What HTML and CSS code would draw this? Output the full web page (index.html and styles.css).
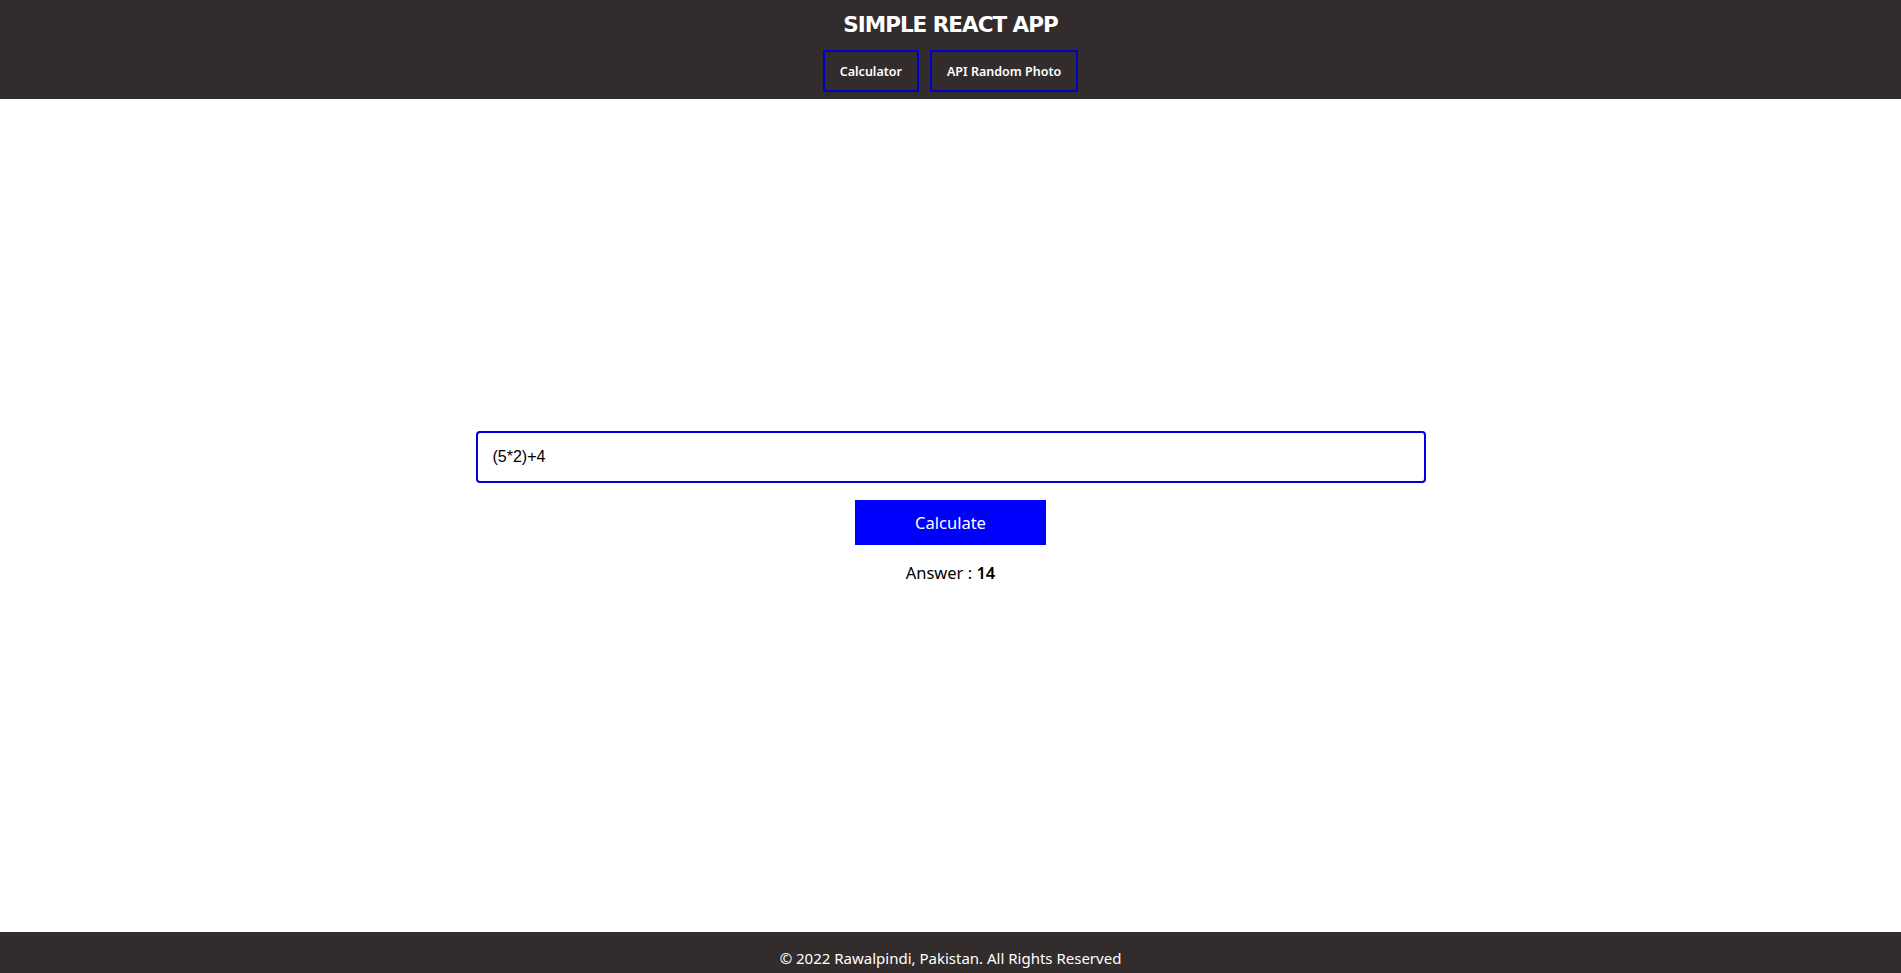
FILE: index.html
```html
<!DOCTYPE html>
<html lang="en">
<head>
<meta charset="utf-8">
<title>Simple React App</title>
<link rel="stylesheet" href="styles.css">
</head>
<body>
<div class="app">
  <header class="header">
    <h1 class="title">SIMPLE REACT APP</h1>
    <nav class="nav">
      <a class="nav-btn" href="#">Calculator</a>
      <a class="nav-btn" href="#">API Random Photo</a>
    </nav>
  </header>
  <main class="main">
    <div class="calc">
      <input class="calc-input" type="text" value="(5*2)+4">
      <button class="calc-btn" type="button">Calculate</button>
      <p class="answer">Answer : <strong>14</strong></p>
    </div>
  </main>
  <footer class="footer">© 2022 Rawalpindi, Pakistan. All Rights Reserved</footer>
</div>
</body>
</html>
```
FILE: styles.css
```css
* { box-sizing: border-box; }
html, body { margin: 0; padding: 0; height: 100%; }
body { font-family: "Noto Sans", "Open Sans", sans-serif; background: #fff; color: #000; }
.app { display: flex; flex-direction: column; min-height: 100vh; }
.header {
  height: 99px;
  background: #322d2c;
  display: flex;
  flex-direction: column;
  align-items: center;
  padding-top: 8px;
}
.title {
  margin: 0;
  color: #fff;
  font-family: "DejaVu Sans", sans-serif;
  font-weight: bold;
  font-size: 21.5px;
  line-height: 34px;
  letter-spacing: -1px;
}
.nav { display: flex; gap: 11px; margin-top: 8px; }
.nav-btn {
  display: flex;
  align-items: center;
  justify-content: center;
  height: 42px;
  padding: 0 15px;
  border: 2px solid #0000cc;
  color: #fff;
  text-decoration: none;
  font-size: 12.5px;
  font-weight: 600;
}
.main {
  flex: 1;
  display: flex;
  align-items: center;
  justify-content: center;
  padding-bottom: 16px;
}
.calc { display: flex; flex-direction: column; align-items: center; width: 950px; }
.calc-input {
  width: 950px;
  height: 52px;
  border: 2px solid #0000dd;
  border-radius: 4px;
  padding: 0 15px;
  font-family: "Liberation Sans", Arial, sans-serif;
  font-size: 16px;
  color: #000;
  outline: none;
}
.calc-btn {
  margin-top: 17px;
  width: 191px;
  height: 45px;
  border: none;
  background: #0000ff;
  color: #fff;
  font-family: "Noto Sans", sans-serif;
  font-size: 16.5px;
}
.answer { margin: 16px 0 0; font-size: 16.5px; line-height: 24px; }
.answer strong { font-weight: 600; }
.footer {
  height: 41px;
  background: #322d2c;
  color: #fff;
  text-align: center;
  font-size: 15px;
  line-height: 20px;
  padding-top: 16px;
}
```
